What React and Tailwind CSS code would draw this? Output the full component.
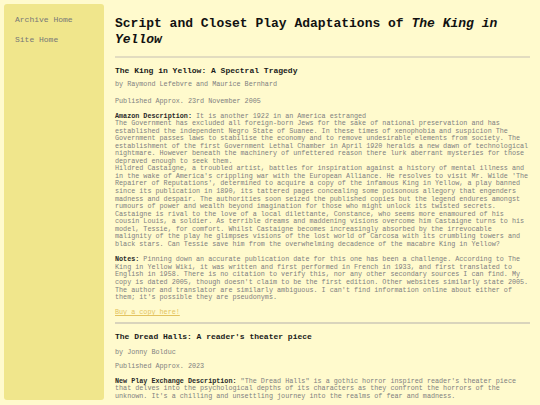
import React from 'react';

const mono = { fontFamily: '"Liberation Mono", "Courier New", monospace' };

const Label = ({ children }) => (
  <span className="font-bold text-[#2a2a2a]">{children}</span>
);

const App = () => {
  return (
    <div className="min-h-screen bg-[#fffacd] p-1 flex items-start gap-[11px]" style={mono}>
      <aside className="sticky top-1 w-[100px] h-[396px] shrink-0 bg-[#f0e68c] rounded-[3px] pl-[11px] pt-[11px] flex flex-col gap-[11px]">
        <a href="#" className="text-[8px] leading-[9px] text-[#777]">Archive Home</a>
        <a href="#" className="text-[8px] leading-[9px] text-[#777]">Site Home</a>
      </aside>

      <main className="w-[415px] pt-3">
        <h1 className="text-[13px] leading-[15.7px] font-bold text-[#111]">
          Script and Closet Play Adaptations of <i>The King in Yellow</i>
        </h1>
        <hr className="mt-[9px] border-0 border-t-2 border-[#e2dcc0]" />

        <section className="text-[6.75px] leading-[7.55px] text-[#808080]">
          <h2 className="mt-[8px] mb-[6px] text-[8px] leading-[9px] font-bold text-[#1a1a1a]">
            The King in Yellow: A Spectral Tragedy
          </h2>
          <p className="mb-[9px]">by Raymond Lefebvre and Maurice Bernhard</p>
          <p className="mb-[7px]">Published Approx. 23rd November 2005</p>
          <p className="mb-[8px]">
            <Label>Amazon Description:</Label> It is another 1922 in an America estranged
            <br />
            The Government has excluded all foreign-born Jews for the sake of national preservation and has established the independent Negro State of Suanee. In these times of xenophobia and suspicion The Government passes laws to stabilise the economy and to remove undesirable elements from society. The establishment of the first Government Lethal Chamber in April 1920 heralds a new dawn of technological nightmare. However beneath the machinery of unfettered reason there lurk aberrant mysteries for those depraved enough to seek them.
            <br />
            Hildred Castaigne, a troubled artist, battles for inspiration against a history of mental illness and in the wake of America's crippling war with the European Alliance. He resolves to visit Mr. Wilde 'The Repairer of Reputations', determined to acquire a copy of the infamous King in Yellow, a play banned since its publication in 1890, its tattered pages concealing some poisonous allegory that engenders madness and despair. The authorities soon seized the published copies but the legend endures amongst rumours of power and wealth beyond imagination for those who might unlock its twisted secrets. Castaigne is rival to the love of a local dilettante, Constance, who seems more enamoured of his cousin Louis, a soldier. As terrible dreams and maddening visions overcome him Castaigne turns to his model, Tessie, for comfort. Whilst Castaigne becomes increasingly absorbed by the irrevocable malignity of the play he glimpses visions of the lost world of Carcosa with its crumbling towers and black stars. Can Tessie save him from the overwhelming decadence of the macabre King in Yellow?
          </p>
          <p className="mb-[7.5px]">
            <Label>Notes:</Label> Pinning down an accurate publication date for this one has been a challenge. According to The King in Yellow Wiki, it was written and first performed in French in 1933, and first translated to English in 1958. There is no citation to verify this, nor any other secondary sources I can find. My copy is dated 2005, though doesn't claim to be the first edition. Other websites similarly state 2005. The author and translator are similarly ambiguous. I can't find information online about either of them; it's possible they are pseudonyms.
          </p>
          <p>
            <a href="#" className="underline text-[#e3c25e]">Buy a copy here!</a>
          </p>
          <hr className="mt-[5px] border-0 border-t-2 border-[#d9d4bc]" />
        </section>

        <section className="text-[6.75px] leading-[7.55px] text-[#808080]">
          <h2 className="mt-[8px] mb-[8px] text-[8px] leading-[9px] font-bold text-[#1a1a1a]">
            The Dread Halls: A reader's theater piece
          </h2>
          <p className="mb-[7px]">by Jonny Bolduc</p>
          <p className="mb-[7px]">Published Approx. 2023</p>
          <p className="mb-[8px]">
            <Label>New Play Exchange Description:</Label> "The Dread Halls" is a gothic horror inspired reader's theater piece that delves into the psychological depths of its characters as they confront the horrors of the unknown. It's a chilling and unsettling journey into the realms of fear and madness.
          </p>
        </section>
      </main>
    </div>
  );
};

export default App;
